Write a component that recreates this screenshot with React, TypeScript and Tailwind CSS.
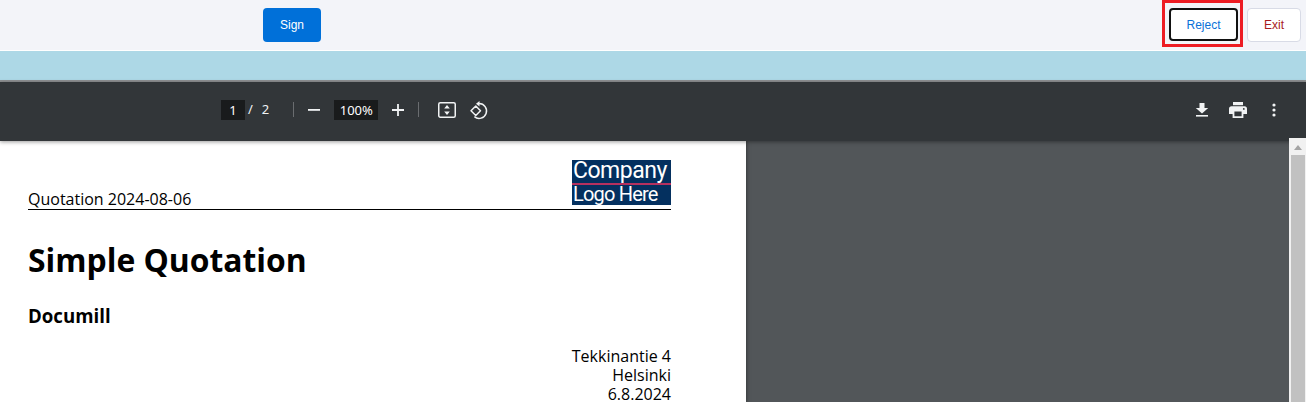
const sans = "font-['Liberation_Sans',Arial,sans-serif]";
const noto = "font-['Noto_Sans','Open_Sans',sans-serif]";
const open = "font-['Open_Sans','Noto_Sans',sans-serif]";

function Divider() {
  return <div className="w-px h-[15px] bg-[#6a6d70]" />;
}

function FitIcon() {
  return (
    <svg width="20" height="20" viewBox="0 0 20 20" fill="none">
      <rect x="1.75" y="2.75" width="16.5" height="14.5" rx="1.5" stroke="#f1f3f4" strokeWidth="1.5" />
      <path d="M10 5 7.2 8.6h5.600zM10 15l-2.800-3.600h5.600z" fill="#f1f3f4" />
    </svg>
  );
}

function RotateIcon() {
  return (
    <svg width="20" height="20" viewBox="0 0 20 20" fill="none">
      <path d="M6.800 6 2 10.800l4.800 4.700 4.700-4.700z" stroke="#f1f3f4" strokeWidth="1.500" strokeLinejoin="round" />
      <path d="M10 3.600a7.400 7.400 0 1 1-4.600 13.100" stroke="#f1f3f4" strokeWidth="1.500" />
      <path d="M10.500 1v5.400L7 3.700z" fill="#f1f3f4" />
    </svg>
  );
}

function DownloadIcon() {
  return (
    <svg width="14" height="14" viewBox="0 0 14 14" fill="#f1f3f4">
      <path d="M4.5 0h5v5h3.7L7 10.6.8 5h3.7z" />
      <rect x="1" y="12" width="12" height="1.6" />
    </svg>
  );
}

function PrintIcon() {
  return (
    <svg width="18" height="16" viewBox="0 0 18 16" fill="#f1f3f4">
      <path d="M4 0h10v3.2H4z" />
      <path fillRule="evenodd" d="M2.6 4.2h12.8A2.6 2.6 0 0 1 18 6.800V12h-3.600v4H3.600v-4H0V6.800a2.600 2.600 0 0 1 2.600-2.600zM5.400 9.600v4.600h7.200V9.600zM14.800 6a.9.9 0 1 0 0 1.800.9.9 0 0 0 0-1.800z" />
    </svg>
  );
}

function MoreIcon() {
  return (
    <svg width="4" height="14" viewBox="0 0 4 14" fill="#f1f3f4">
      <circle cx="2" cy="2" r="1.6" />
      <circle cx="2" cy="7" r="1.6" />
      <circle cx="2" cy="12" r="1.6" />
    </svg>
  );
}

function TopBar() {
  return (
    <div className={`h-[50px] bg-[#f3f4f9] flex items-start pt-2 pl-[263px] pr-[5px] ${sans}`}>
      <button className="w-[58px] h-[34px] rounded bg-[#0070d9] text-white text-xs">Sign</button>
      <div className="ml-auto flex items-start gap-[9px]">
        <div className="relative">
          <button className="block w-[69px] h-[33px] rounded bg-white border-2 border-[#111] text-[#0a72d8] text-xs">Reject</button>
          <div className="absolute -left-[7px] -top-2 w-[81px] h-[47px] border-[3px] border-[#ed1c24]" />
        </div>
        <button className="w-[54px] h-[34px] rounded bg-white border border-[#d8dbe6] text-[#a81c1c] text-xs">Exit</button>
      </div>
    </div>
  );
}

function PdfToolbar() {
  return (
    <div className={`relative z-10 h-[59px] pb-1 bg-[#323639] flex items-center text-[#f1f3f4] shadow-[0_1px_4px_rgba(0,0,0,0.4)] ${noto}`}>
      <div className="ml-[221px] w-6 h-5 bg-[#191b1c] text-white text-[13px] leading-5 text-center">1</div>
      <span className="ml-[3px] text-[13px]">/</span>
      <span className="ml-[9px] text-[13px]">2</span>
      <div className="ml-[24px]"><Divider /></div>
      <svg className="ml-[14px]" width="12" height="12" viewBox="0 0 12 12" fill="#f1f3f4"><rect x="0" y="5" width="12" height="1.800" /></svg>
      <div className="ml-[14px] w-11 h-5 bg-[#191b1c] text-white text-[13px] leading-5 text-center">100%</div>
      <svg className="ml-[14px]" width="12" height="12" viewBox="0 0 12 12" fill="#f1f3f4"><path d="M5.100 0h1.800v5.100H12v1.800H6.900V12H5.100V6.900H0V5.100h5.100z" /></svg>
      <div className="ml-[14px]"><Divider /></div>
      <div className="ml-[18px] flex"><FitIcon /></div>
      <div className="ml-[12px] flex"><RotateIcon /></div>
      <div className="ml-auto flex items-center pr-[30px]">
        <DownloadIcon />
        <div className="ml-[20px] flex"><PrintIcon /></div>
        <div className="ml-[25px] flex"><MoreIcon /></div>
      </div>
    </div>
  );
}

function Logo() {
  return (
    <div className="w-[99px] h-[45px] bg-[#04305f] flex flex-col text-white font-['Roboto',sans-serif] leading-none">
      <div className="h-[25px] border-b-2 border-[#b5305f] pl-[1px] text-[23px] leading-[22px] tracking-[-0.5px]">Company</div>
      <div className="pl-[1px] text-[20px] leading-[19px] tracking-[-0.8px]">Logo Here</div>
    </div>
  );
}

function Page() {
  return (
    <div className={`relative w-[746px] bg-white text-black pl-7 pr-[75px] pt-[19px] shadow-[0_0_4px_rgba(0,0,0,0.5)] ${open}`}>
      <div className="flex items-end justify-between border-b border-black h-[50px]">
        <div className="text-base leading-[19px]">Quotation 2024-08-06</div>
        <div className="mb-[4px]"><Logo /></div>
      </div>
      <h1 className="mt-[26px] text-[31.850px] leading-[48px] font-bold">Simple Quotation</h1>
      <h2 className="mt-[18px] text-[18.670px] leading-[27px] font-bold">Documill</h2>
      <div className="mt-[18px] text-right text-base leading-[19px]">
        <div>Tekkinantie 4</div>
        <div>Helsinki</div>
        <div>6.8.2024</div>
      </div>
    </div>
  );
}

function Scrollbar() {
  return (
    <div className="relative z-20 -mt-[3px] w-[17px] bg-[#f1f1f1] flex flex-col items-center">
      <svg className="mt-[7px]" width="8" height="5" viewBox="0 0 8 5" fill="#a3a3a3"><path d="M4 0 8 5H0z" /></svg>
      <div className="mt-[5px] w-[14px] flex-1 bg-[#c1c1c1]" />
    </div>
  );
}

export default function App() {
  return (
    <div className="w-[1306px] h-[402px] overflow-hidden flex flex-col bg-white">
      <TopBar />
      <div className="h-[29px] mt-px bg-[#add8e6]" />
      <div className="h-0.5 bg-[#8f9193]" />
      <PdfToolbar />
      <div className="flex-1 min-h-0 flex bg-[#525659]">
        <Page />
        <div className="flex-1" />
        <Scrollbar />
      </div>
    </div>
  );
}
